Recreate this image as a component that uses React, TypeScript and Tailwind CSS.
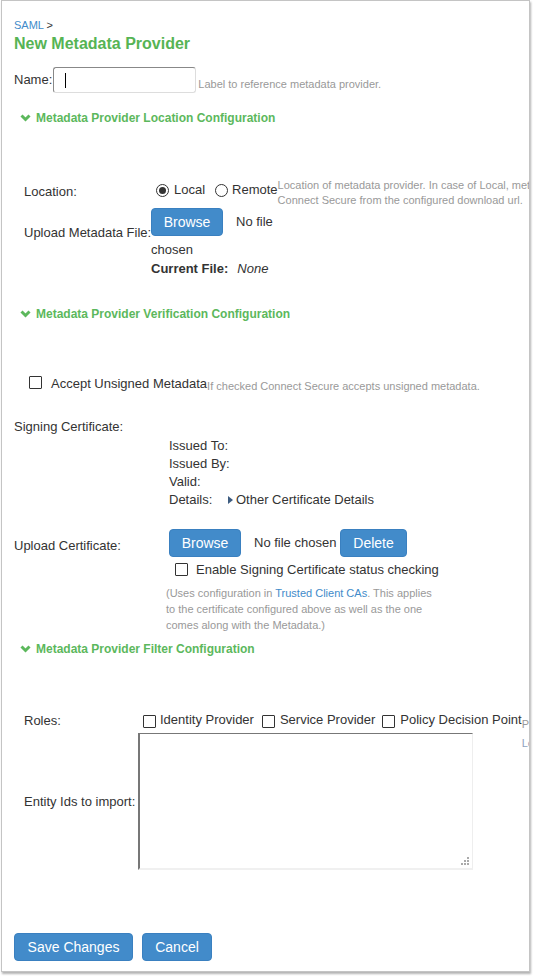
import React from 'react';

const font = { fontFamily: '"Liberation Sans", Arial, sans-serif' };

function Chevron() {
  return (
    <svg width="11" height="8" viewBox="0 0 11 8" className="shrink-0">
      <polyline points="1.5,1.5 5.5,5.5 9.5,1.5" fill="none" stroke="#5cb85c" strokeWidth="3" />
    </svg>
  );
}

function SectionHeader({ title, className = '' }: { title: string; className?: string }) {
  return (
    <div className={`flex items-center gap-[5px] pl-[6px] text-[12px] leading-[16px] font-bold text-[#5cb85c] ${className}`}>
      <Chevron />
      <span>{title}</span>
    </div>
  );
}

function Checkbox({ className = '' }: { className?: string }) {
  return <span className={`inline-block w-[13px] h-[13px] shrink-0 border border-[#333] bg-white rounded-[1px] ${className}`} />;
}

function Radio({ checked = false, className = '' }: { checked?: boolean; className?: string }) {
  return (
    <span className={`inline-flex items-center justify-center w-[13px] h-[13px] shrink-0 rounded-full border border-[#333] bg-white ${className}`}>
      {checked && <span className="w-[7px] h-[7px] rounded-full bg-[#333]" />}
    </span>
  );
}

function BlueButton({ children, className = '' }: { children: React.ReactNode; className?: string }) {
  return (
    <button className={`h-[28px] shrink-0 rounded-[4px] border border-[#3a80c0] bg-[#428bca] text-white text-[14px] leading-[18px] flex items-center justify-center ${className}`}>
      {children}
    </button>
  );
}

function Grip() {
  const dots = [
    [6, 0],
    [3, 3],
    [6, 3],
    [0, 6],
    [3, 6],
    [6, 6],
  ];
  return (
    <svg width="8" height="8" viewBox="0 0 8 8" className="absolute right-[3px] bottom-[3px]">
      {dots.map(([x, y], i) => (
        <rect key={i} x={x} y={y} width="2" height="2" fill="#aaa" />
      ))}
    </svg>
  );
}

export default function App() {
  return (
    <div className="bg-white min-h-[977px]" style={font}>
      <div className="ml-px w-[529px] h-[972px] border border-[#c4c4c4] shadow-[1px_2px_2px_rgba(0,0,0,0.3)] bg-white overflow-hidden text-[13px] text-[#333] pl-[12px]">
        {/* Breadcrumb */}
        <div className="pt-[17px] text-[11px] leading-[14px]">
          <span className="text-[#428bca]">SAML</span> &gt;
        </div>
        <h1 className="mt-[2px] text-[16px] leading-[20px] font-bold text-[#56b454]">New Metadata Provider</h1>

        {/* Name */}
        <div className="mt-[13px] flex items-center h-[26px]">
          <span className="leading-[16px]">Name:</span>
          <div className="ml-px w-[143px] h-[26px] rounded-[3px] border border-[#ddd] border-t-[#888] border-l-[#888] flex items-center pl-[11px]">
            <span className="w-px h-[15px] bg-black" />
          </div>
          <span className="ml-[2px] mt-[8px] text-[11px] leading-[14px] text-[#999]">Label to reference metadata provider.</span>
        </div>

        <SectionHeader title="Metadata Provider Location Configuration" className="mt-[17px]" />

        {/* Location */}
        <div className="mt-[51px] flex items-start">
          <div className="w-[137px] shrink-0 pl-[10px] pt-[7px] leading-[16px]">Location:</div>
          <div className="pt-[5px] flex items-center leading-[16px] shrink-0">
            <Radio checked className="ml-[5px]" />
            <span className="ml-[5px]">Local</span>
            <Radio className="ml-[10px]" />
            <span className="ml-[4px]">Remote</span>
          </div>
          <div className="pt-px text-[11px] leading-[15px] text-[#999] whitespace-nowrap">
            <div>Location of metadata provider. In case of Local, metadata file is uploaded. In case of Remote, it is downloaded by</div>
            <div>Connect Secure from the configured download url.</div>
          </div>
        </div>

        {/* Upload metadata file */}
        <div className="flex items-start">
          <div className="w-[137px] shrink-0 pl-[10px] pt-[17px] leading-[16px] whitespace-nowrap">Upload Metadata File:</div>
          <div>
            <div className="flex items-center">
              <BlueButton className="w-[72px]">Browse</BlueButton>
              <span className="ml-[13px] leading-[16px]">No file</span>
            </div>
            <div className="mt-[5px] leading-[18px]">chosen</div>
            <div className="mt-px leading-[18px] flex">
              <b>Current File:</b>
              <i className="ml-[9px]">None</i>
            </div>
          </div>
        </div>

        <SectionHeader title="Metadata Provider Verification Configuration" className="mt-[28px]" />

        {/* Accept unsigned */}
        <div className="mt-[53px] flex items-center pl-[15px]">
          <Checkbox className="-mt-[3px]" />
          <span className="ml-[9px] leading-[16px]">Accept Unsigned Metadata</span>
          <span className="mt-[4px] text-[11px] leading-[14px] text-[#999] whitespace-nowrap">If checked Connect Secure accepts unsigned metadata.</span>
        </div>

        {/* Signing certificate */}
        <div className="mt-[26px] leading-[16px]">Signing Certificate:</div>
        <div className="mt-[2px] pl-[155px] leading-[18px]">
          <div>Issued To:</div>
          <div>Issued By:</div>
          <div>Valid:</div>
          <div className="flex items-center">
            <span className="w-[59px] shrink-0">Details:</span>
            <svg width="5" height="8" viewBox="0 0 5 8" className="shrink-0">
              <polygon points="0,0 5,4 0,8" fill="#3d5c80" />
            </svg>
            <span className="ml-[3px]">Other Certificate Details</span>
          </div>
        </div>

        {/* Upload certificate */}
        <div className="mt-[20px] flex items-start">
          <div className="w-[155px] shrink-0 pt-[9px] leading-[16px]">Upload Certificate:</div>
          <div className="flex items-center">
            <BlueButton className="w-[72px]">Browse</BlueButton>
            <span className="ml-[13px] w-[86px] leading-[16px] whitespace-nowrap">No file chosen</span>
            <BlueButton className="w-[67px]">Delete</BlueButton>
          </div>
        </div>
        <div className="mt-[5px] pl-[161px] flex items-center">
          <Checkbox className="-mt-[2px]" />
          <span className="ml-[8px] leading-[16px]">Enable Signing Certificate status checking</span>
        </div>
        <div className="mt-[7px] pl-[152px] text-[11px] leading-[16px] text-[#999]">
          (Uses configuration in <span className="text-[#428bca]">Trusted Client CAs</span>. This applies
          <br />
          to the certificate configured above as well as the one
          <br />
          comes along with the Metadata.)
        </div>

        <SectionHeader title="Metadata Provider Filter Configuration" className="mt-[8px]" />

        {/* Roles */}
        <div className="mt-[55px] flex items-start h-[16px]">
          <div className="w-[124px] shrink-0 pl-[10px] pt-px leading-[16px]">Roles:</div>
          <div className="flex items-center leading-[16px] shrink-0 whitespace-nowrap">
            <Checkbox className="ml-[5px] mt-[2px]" />
            <span className="ml-[4px]">Identity Provider</span>
            <Checkbox className="ml-[8px] mt-[2px]" />
            <span className="ml-[5px]">Service Provider</span>
            <Checkbox className="ml-[7px] mt-[2px]" />
            <span className="ml-[5px]">Policy Decision Point</span>
          </div>
          <div className="pt-[3px] text-[11px] leading-[19px] text-[#999] whitespace-nowrap">
            <div>Provider roles to import.</div>
            <div className="text-[#8fa2bd]">Leave unchecked to import all roles.</div>
          </div>
        </div>

        {/* Entity ids */}
        <div className="mt-[5px] flex items-center">
          <div className="w-[124px] shrink-0 pl-[10px] leading-[16px] whitespace-nowrap">Entity Ids to import:</div>
          <div className="relative w-[335px] h-[137px] bg-white border-t border-l-2 border-r border-b-2 border-t-[#777] border-l-[#777] border-r-[#eee] border-b-[#f0f0f0]">
            <Grip />
          </div>
        </div>

        {/* Actions */}
        <div className="mt-[63px] flex items-center gap-[9px]">
          <BlueButton className="w-[119px]">Save Changes</BlueButton>
          <BlueButton className="w-[70px]">Cancel</BlueButton>
        </div>
      </div>
    </div>
  );
}
